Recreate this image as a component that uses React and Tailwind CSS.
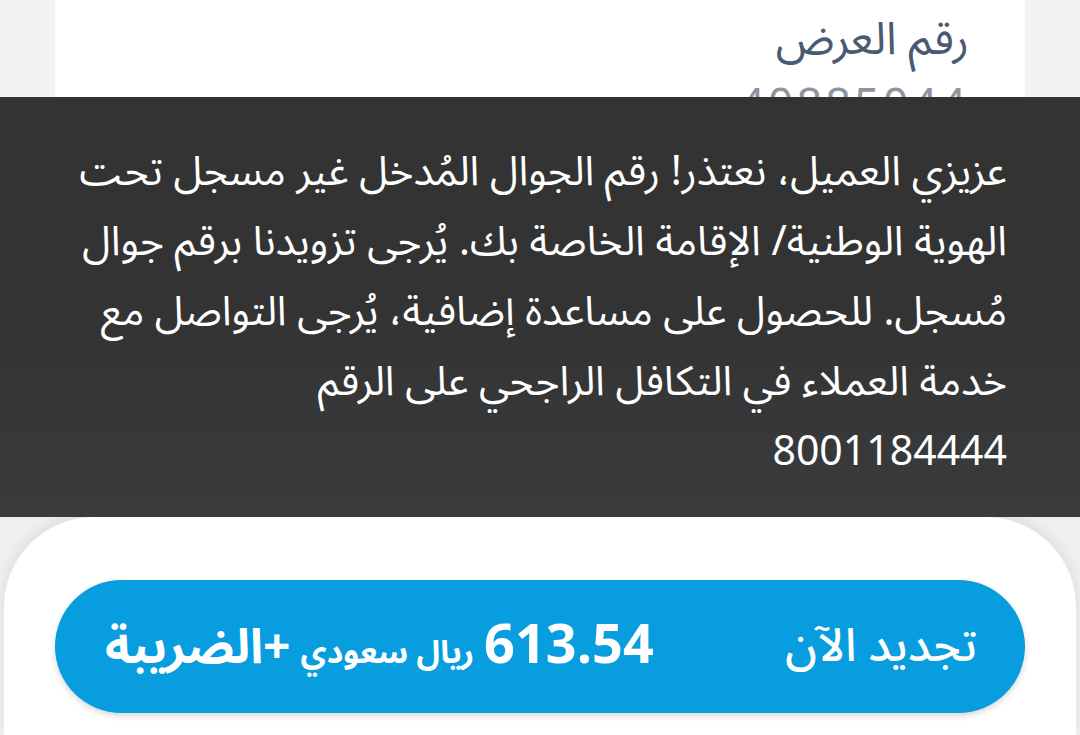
export default function App() {
    const ar = { fontFamily: '"Noto Sans Arabic", "Noto Sans", "DejaVu Sans", sans-serif' };

    return (
        <div dir="rtl" className="relative h-[735px] w-[1080px] overflow-hidden bg-[#efeff1]" style={ar}>
            <div className="h-[517px] px-[55px] bg-gradient-to-r from-[#f3f3f4] via-[#ededee] to-[#f3f3f4]">
                <div className="h-full bg-white pr-[56px] pt-[8px]">
                    <p className="text-[45px] leading-[64px] text-[#4b5a72]">رقم العرض</p>
                    <p className="mt-[7px] text-[45px] leading-[56px] tracking-[3px] text-[#8d95a1]">40885044</p>
                </div>
            </div>

            <div className="absolute left-0 right-0 top-[97px] h-[420px] bg-gradient-to-b from-[#333333] via-[#333333] to-[#3a3b3d] pl-[70px] pr-[73px] pt-[40px]">
                <p className="text-[41px] leading-[70px] text-white text-right">
                    عزيزي العميل، نعتذر! رقم الجوال المُدخل غير مسجل تحت الهوية الوطنية/ الإقامة الخاصة بك. يُرجى تزويدنا برقم جوال مُسجل. للحصول على مساعدة إضافية، يُرجى التواصل مع خدمة العملاء في التكافل الراجحي على الرقم
                    <br />
                    8001184444
                </p>
            </div>

            <div className="mx-[4px] h-[218px] rounded-t-[90px] bg-white pt-[63px] px-[51px] shadow-[0_-4px_14px_rgba(0,0,0,0.08)]">
                <button className="flex h-[133px] w-full items-center justify-between rounded-full bg-[#079ddf] pr-[48px] pl-[50px] text-white shadow-[0_3px_6px_rgba(0,0,0,0.15)]">
                    <span className="text-[46px] font-medium">تجديد الآن</span>
                    <span className="flex items-baseline gap-[10px]" dir="rtl">
                        <span className="text-[54px] font-bold">613.54</span>
                        <span className="text-[32px] font-bold">ريال سعودي</span>
                        <span className="text-[48px] font-bold">+الضريبة</span>
                    </span>
                </button>
            </div>
        </div>
    );
}
